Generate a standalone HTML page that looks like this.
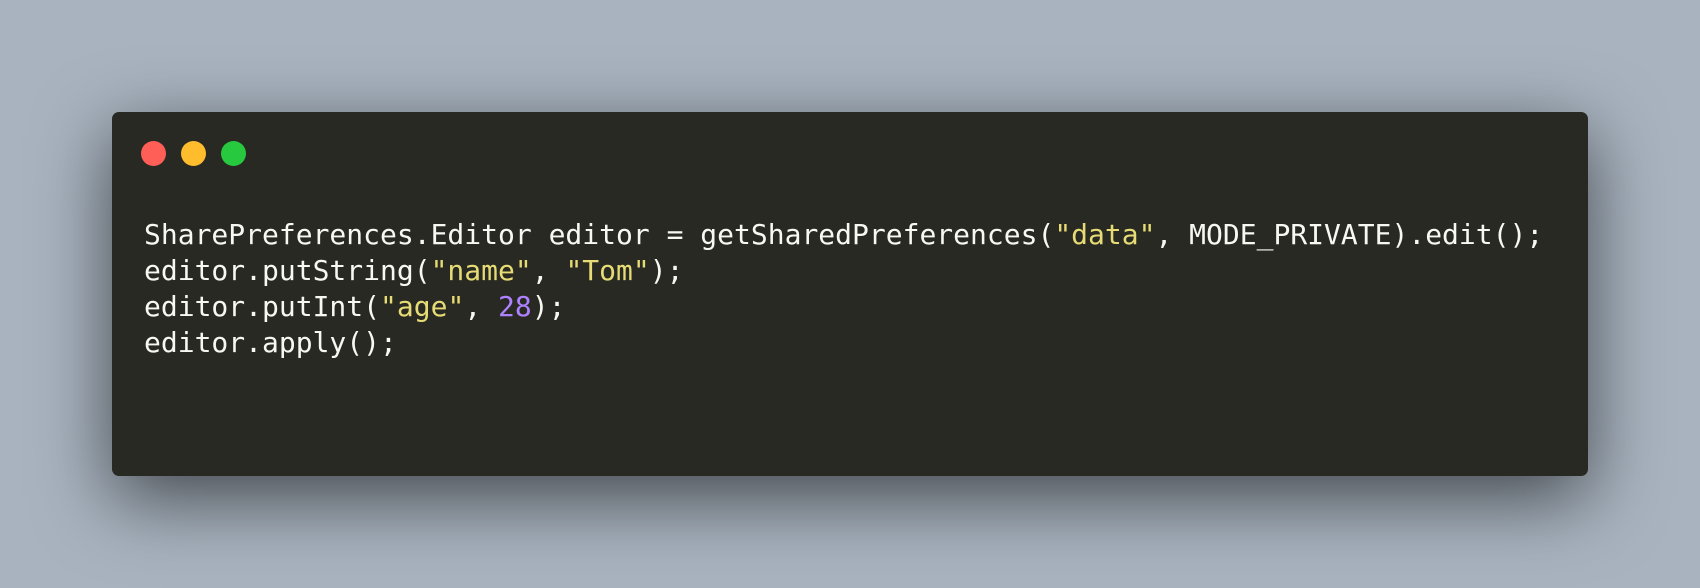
<!DOCTYPE html>
<html><head><meta charset="utf-8"><style>
html,body{margin:0;padding:0}
body{width:1700px;height:588px;background:#a8b3bf;position:relative;overflow:hidden}
.win{position:absolute;left:112px;top:112px;width:1476px;height:364px;background:#282923;border-radius:7px;box-shadow:0 22px 75px rgba(0,0,0,0.6)}
.dot{position:absolute;top:29px;width:25px;height:25px;border-radius:50%}
pre{position:absolute;left:32px;top:105px;margin:0;font-family:"DejaVu Sans Mono",monospace;font-size:28px;line-height:36px;color:#f8f8f2}
.s{color:#e6db74}.n{color:#ae81ff}
</style></head><body>
<div class="win">
<div class="dot" style="left:29px;background:#ff5f56"></div>
<div class="dot" style="left:69px;background:#ffbd2e"></div>
<div class="dot" style="left:109px;background:#27c93f"></div>
<pre>SharePreferences.Editor editor = getSharedPreferences(<span class="s">"data"</span>, MODE_PRIVATE).edit();
editor.putString(<span class="s">"name"</span>, <span class="s">"Tom"</span>);
editor.putInt(<span class="s">"age"</span>, <span class="n">28</span>);
editor.apply();</pre>
</div>
</body></html>
